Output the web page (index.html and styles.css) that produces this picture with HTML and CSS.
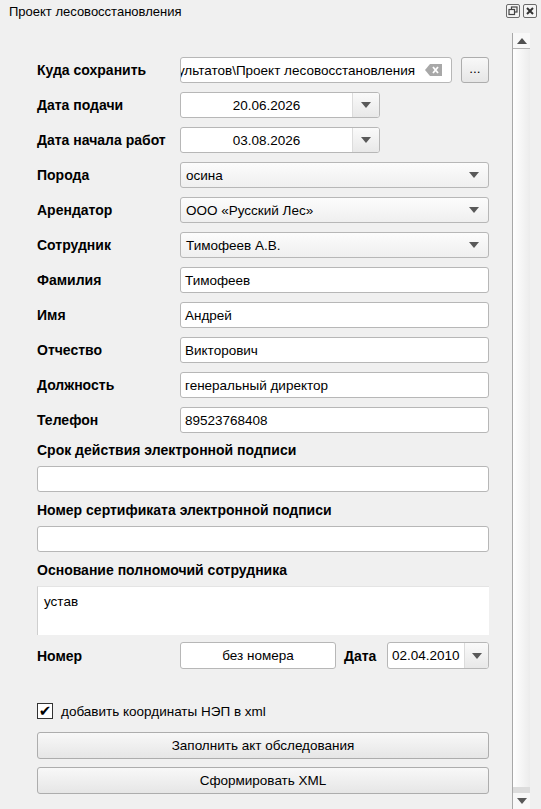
FILE: index.html
```html
<!DOCTYPE html>
<html lang="ru">

<head>
    <meta charset="UTF-8">
    <meta name="viewport" content="width=device-width, initial-scale=1.0">
    <title>Проект лесовосстановления</title>
    <link rel="stylesheet" href="styles.css">
</head>

<body>
    <div class="dock">
        <div class="titlebar">
            <span class="title">Проект лесовосстановления</span>
            <div class="tools">
                <svg width="14" height="14" viewBox="0 0 14 14">
                    <rect x="0.5" y="0.5" width="13" height="13" rx="1.5" fill="#f4f4f4" stroke="#6a6a6a"/>
                    <rect x="5.5" y="3" width="5.5" height="5" fill="none" stroke="#444" stroke-width="1.2"/>
                    <rect x="3" y="5.5" width="5.5" height="5" fill="#f4f4f4" stroke="#444" stroke-width="1.2"/>
                </svg>
                <svg width="14" height="14" viewBox="0 0 14 14">
                    <rect x="0.5" y="0.5" width="13" height="13" rx="1.5" fill="#f4f4f4" stroke="#6a6a6a"/>
                    <path d="M4 4 L10 10 M10 4 L4 10" stroke="#333" stroke-width="2"/>
                </svg>
            </div>
        </div>

        <div class="body">
            <div class="content">
                <div class="grid">
                    <label class="lbl">Куда сохранить</label>
                    <div class="path-row">
                        <div class="input path">
                            <span class="path-text">ультатов\Проект лесовосстановления</span>
                            <svg class="clear" width="17" height="12" viewBox="0 0 17 12">
                                <path d="M5 0 H17 V12 H5 L0 6 Z" fill="#a8a8a8"/>
                                <path d="M8 3 L13 9 M13 3 L8 9" stroke="#fff" stroke-width="1.8"/>
                            </svg>
                        </div>
                        <div class="btn dots">...</div>
                    </div>

                    <label class="lbl">Дата подачи</label>
                    <div class="date">
                        <span class="date-val">20.06.2026</span>
                        <span class="date-arrow"><i class="tri"></i></span>
                    </div>

                    <label class="lbl">Дата начала работ</label>
                    <div class="date">
                        <span class="date-val">03.08.2026</span>
                        <span class="date-arrow"><i class="tri"></i></span>
                    </div>

                    <label class="lbl">Порода</label>
                    <div class="combo">осина<i class="tri"></i></div>

                    <label class="lbl">Арендатор</label>
                    <div class="combo">ООО «Русский Лес»<i class="tri"></i></div>

                    <label class="lbl">Сотрудник</label>
                    <div class="combo">Тимофеев А.В.<i class="tri"></i></div>

                    <label class="lbl">Фамилия</label>
                    <div class="input">Тимофеев</div>

                    <label class="lbl">Имя</label>
                    <div class="input">Андрей</div>

                    <label class="lbl">Отчество</label>
                    <div class="input">Викторович</div>

                    <label class="lbl">Должность</label>
                    <div class="input">генеральный директор</div>

                    <label class="lbl">Телефон</label>
                    <div class="input">89523768408</div>
                </div>

                <div class="lbl block-lbl first">Срок действия электронной подписи</div>
                <div class="input wide"></div>

                <div class="lbl block-lbl">Номер сертификата электронной подписи</div>
                <div class="input wide"></div>

                <div class="lbl block-lbl">Основание полномочий сотрудника</div>
                <div class="textarea">устав</div>

                <div class="num-row">
                    <label class="lbl num-lbl">Номер</label>
                    <div class="input num">без номера</div>
                    <label class="lbl">Дата</label>
                    <div class="date small">
                        <span class="date-val">02.04.2010</span>
                        <span class="date-arrow"><i class="tri"></i></span>
                    </div>
                </div>

                <div class="check-row">
                    <span class="checkbox">✔</span>
                    <span>добавить координаты НЭП в xml</span>
                </div>

                <div class="btn wide-btn">Заполнить акт обследования</div>
                <div class="btn wide-btn">Сформировать XML</div>
            </div>

            <div class="scrollbar">
                <div class="sb-btn up"><i class="tri up-tri"></i></div>
                <div class="sb-handle"></div>
                <div class="sb-rest"></div>
                <div class="sb-btn down"><i class="tri"></i></div>
            </div>
        </div>
    </div>
</body>

</html>
```

FILE: styles.css
```css
* {
    margin: 0;
    padding: 0;
    box-sizing: border-box;
}

body {
    background: #f0f0f0;
    font-family: "Liberation Sans", Arial, sans-serif;
    font-size: 13.5px;
    color: #000;
    width: 541px;
    height: 809px;
    overflow: hidden;
}

.titlebar {
    height: 33px;
    display: flex;
    justify-content: space-between;
    padding: 4px 4px 0 9px;
}

.title {
    font-size: 13px;
    line-height: 16px;
}

.tools {
    display: flex;
    gap: 3px;
}

.body {
    display: flex;
    height: 776px;
}

.content {
    width: 512px;
    padding: 24px 23px 0 37px;
}

.grid {
    display: grid;
    grid-template-columns: 143px 309px;
    grid-auto-rows: 26px;
    row-gap: 9px;
}

.lbl {
    font-weight: bold;
    display: flex;
    align-items: center;
    white-space: nowrap;
    font-size: 14px;
}

.input {
    height: 26px;
    background: #fff;
    border: 1px solid #b7b7b7;
    border-radius: 3px;
    display: flex;
    align-items: center;
    padding: 0 4px;
    white-space: nowrap;
    overflow: hidden;
}

.path-row {
    display: flex;
    gap: 9px;
}

.path {
    width: 272px;
    position: relative;
    padding: 0;
}

.path-text {
    position: absolute;
    right: 36px;
}

.clear {
    position: absolute;
    right: 9px;
    top: 6px;
}

.btn {
    background: linear-gradient(#f8f8f8, #e6e6e6);
    border: 1px solid #adadad;
    border-radius: 3px;
    display: flex;
    align-items: center;
    justify-content: center;
}

.dots {
    width: 28px;
    height: 26px;
    padding-bottom: 4px;
}

.tri {
    display: block;
    width: 0;
    height: 0;
    border-left: 5px solid transparent;
    border-right: 5px solid transparent;
    border-top: 6px solid #595959;
}

.date {
    width: 200px;
    height: 26px;
    border: 1px solid #b7b7b7;
    border-radius: 3px;
    background: #fff;
    display: flex;
    overflow: hidden;
}

.date-val {
    flex: 1;
    display: flex;
    align-items: center;
    justify-content: center;
}

.date-arrow {
    width: 27px;
    border-left: 1px solid #dcdcdc;
    background: linear-gradient(#fafafa, #e8e8e8);
    display: flex;
    align-items: center;
    justify-content: center;
}

.combo {
    height: 26px;
    border: 1px solid #b7b7b7;
    border-radius: 3px;
    background: linear-gradient(#fcfcfc, #efefef);
    display: flex;
    align-items: center;
    justify-content: space-between;
    padding: 0 9px 0 5px;
}

.block-lbl {
    height: 18px;
    margin-top: 9px;
    margin-bottom: 7px;
}

.block-lbl.first {
    margin-top: 8px;
}

.wide {
    width: 452px;
}

.textarea {
    width: 452px;
    height: 49px;
    background: #fff;
    border-left: 1px solid #cfcfcf;
    border-top: 1px solid #e4e4e4;
    padding: 7px 6px;
}

.num-row {
    display: flex;
    height: 27px;
    margin-top: 7px;
    gap: 8px;
}

.num-lbl {
    width: 135px;
}

.num {
    width: 156px;
    height: 27px;
    justify-content: center;
}

.date.small {
    width: 102px;
    height: 27px;
    margin-left: auto;
}

.date.small .date-val {
    justify-content: flex-start;
    padding-left: 4px;
}

.date.small .date-arrow {
    width: 24px;
}

.check-row {
    display: flex;
    align-items: center;
    gap: 8px;
    margin-top: 34px;
    height: 16px;
}

.checkbox {
    width: 16px;
    height: 16px;
    border: 1px solid #333;
    background: #fff;
    font-size: 15px;
    line-height: 14px;
    text-align: center;
    font-family: "DejaVu Sans", sans-serif;
}

.wide-btn {
    width: 452px;
    height: 27px;
    margin-top: 13px;
}

.wide-btn + .wide-btn {
    margin-top: 8px;
}

.scrollbar {
    width: 18px;
    border-left: 1px solid #a8a8a8;
    display: flex;
    flex-direction: column;
}

.sb-btn {
    height: 16px;
    background: #f8f8f8;
    display: flex;
    align-items: center;
    justify-content: center;
}

.sb-btn.up {
    border-bottom: 1px solid #b4b4b4;
}

.up-tri {
    border-top: 0;
    border-bottom: 6px solid #505050;
}

.sb-handle {
    flex: 1;
    background: linear-gradient(90deg, #ffffff, #ececec);
}

.sb-rest {
    height: 6px;
    background: #dcdcdc;
}
```
